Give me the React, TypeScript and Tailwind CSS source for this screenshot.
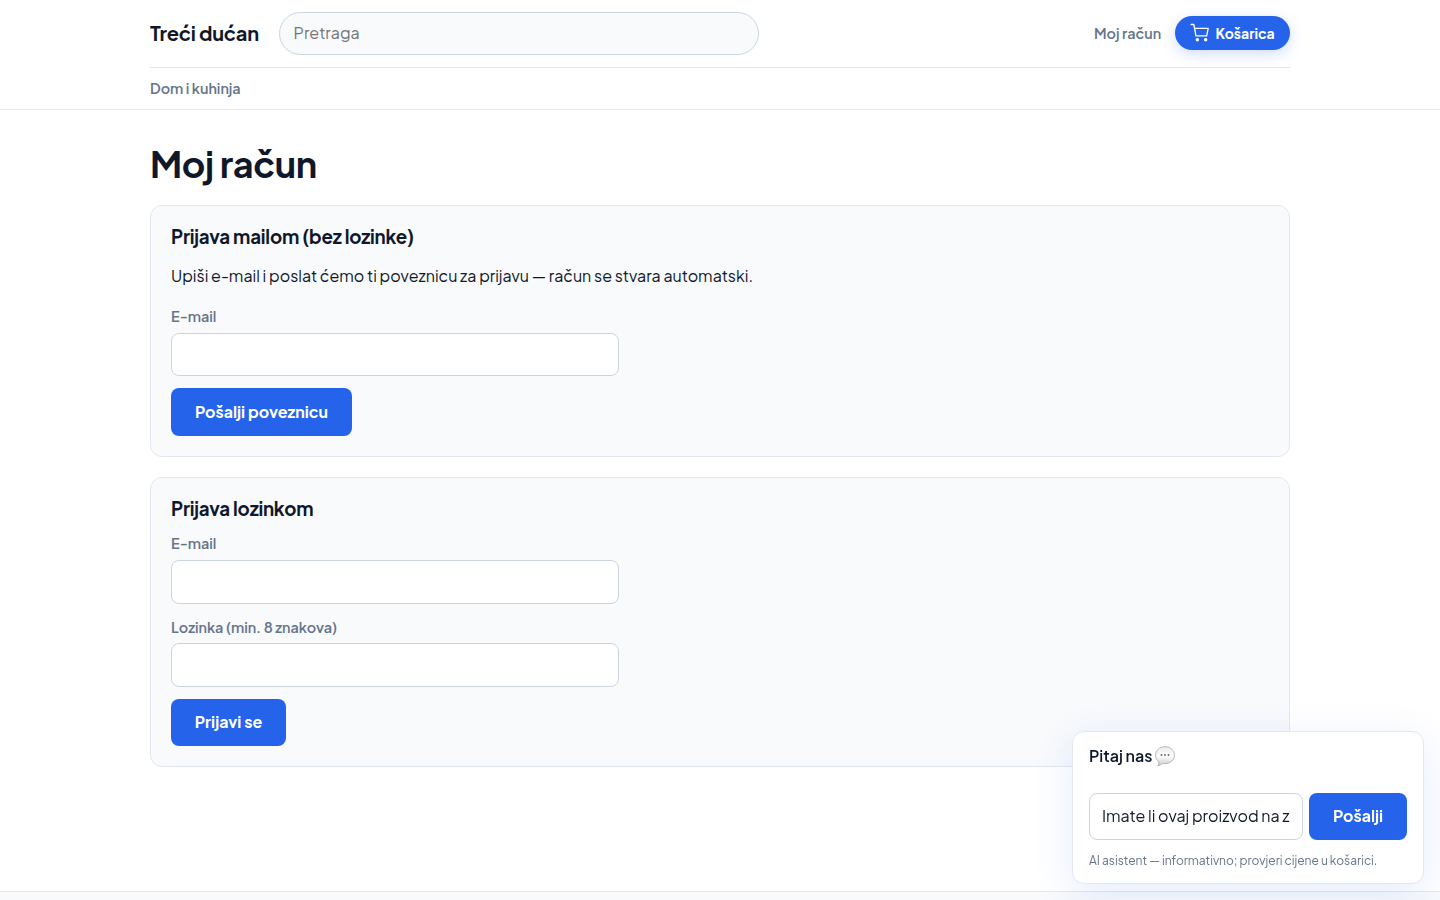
import type { ReactNode } from "react";

function Label({ children, className }: { children: ReactNode; className: string }) {
  return <span className={`block whitespace-nowrap text-[14.4px] font-semibold text-[#64748b] ${className}`}>{children}</span>;
}

function TextField({ className, type }: { className: string; type: string }) {
  return <input type={type} className={`block w-[448px] rounded-lg border border-[#cbd5e1] bg-white px-3 outline-none ${className}`} />;
}

function CartIcon() {
  return (
    <svg width="20" height="20" viewBox="0 0 24 24" fill="none" stroke="currentColor" strokeWidth="1.6" strokeLinecap="round" strokeLinejoin="round">
      <path d="M1.4 1.8h3.200l2.600 13.600h12.800L21.800 6.400H5.500" />
      <circle cx="8.800" cy="20" r="1.300" fill="currentColor" />
      <circle cx="18.800" cy="20" r="1.300" fill="currentColor" />
    </svg>
  );
}

function SpeechBalloon() {
  return (
    <svg width="20" height="21" viewBox="0 0 20 21" className="shrink-0">
      <defs>
        <linearGradient id="balloon" x1="0" y1="0" x2="0" y2="1">
          <stop offset="0" stopColor="#ececec" />
          <stop offset="0.5" stopColor="#fdfdfd" />
          <stop offset="1" stopColor="#cccccc" />
        </linearGradient>
      </defs>
      <path d="M10 .7C4.500.7.600 4.300.600 9.200c0 3 1.300 5.300 3.500 6.800 0 1.400-.5 2.600-1.500 3.600 2 0 3.700-.8 4.800-2.200.8.200 1.700.2 2.600.2 5.500 0 9.400-3.500 9.400-8.400S15.500.7 10 .7Z" fill="url(#balloon)" stroke="#b0b0b0" strokeWidth=".9" />
      <circle cx="6.500" cy="9" r=".9" fill="#666" />
      <circle cx="10" cy="9" r=".9" fill="#666" />
      <circle cx="13.500" cy="9" r=".9" fill="#666" />
    </svg>
  );
}

export default function App() {
  return (
    <div className="flex h-[900px] flex-col overflow-hidden bg-white font-['Plus_Jakarta_Sans',Inter,sans-serif] text-base text-[#0f172a]">
      <header className="h-[110px] shrink-0 border-b border-[#e2e8f0]">
        <div className="mx-auto w-[1140px]">
          <div className="flex h-[68px] items-center border-b border-[#e2e8f0]">
            <a className="w-[129px] pb-px text-[20px] font-bold tracking-[-0.01em] whitespace-nowrap">Treći dućan</a>
            <input placeholder="Pretraga" className="h-[43px] w-[480px] rounded-full border border-[#cbd5e1] bg-[#f8fafc] px-[13.6px] pb-[3px] outline-none placeholder:text-[#757575]" />
            <nav className="ml-auto flex items-center gap-[14px] pb-px">
              <a className="w-[67px] pt-0.5 text-[14.4px] font-semibold whitespace-nowrap text-[#64748b]">Moj račun</a>
              <a className="flex h-[34px] w-[115px] items-center gap-[5.5px] rounded-full bg-[#2563eb] pl-[15px] text-[14px] font-bold text-white shadow-[0_4px_14px_rgba(37,99,235,0.22)]">
                <CartIcon />
                Košarica
              </a>
            </nav>
          </div>
          <nav className="flex h-[41px] items-center">
            <a className="text-[14.4px] font-semibold whitespace-nowrap text-[#64748b]">Dom i kuhinja</a>
          </nav>
        </div>
      </header>

      <main className="mx-auto flex w-[1140px] flex-1 flex-col">
        <h1 className="mt-[29px] h-[50px] text-[36px] leading-[50px] font-bold tracking-[-0.01em] whitespace-nowrap">Moj račun</h1>

        <section className="mt-4 h-[252px] shrink-0 rounded-xl border border-[#e2e8f0] bg-[#f8fafc] p-5">
          <h2 className="w-max text-[18.72px] leading-[22px] font-bold tracking-[-0.01em]">Prijava mailom (bez lozinke)</h2>
          <p className="mt-4 w-max leading-6">Upiši e-mail i poslat ćemo ti poveznicu za prijavu — račun se stvara automatski.</p>
          <Label className="mt-[17px] leading-[22px]">E-mail</Label>
          <TextField type="email" className="mt-1.5 h-[43px]" />
          <button className="mt-3 block h-12 w-[181px] rounded-lg bg-[#2563eb] font-bold whitespace-nowrap text-white">Pošalji poveznicu</button>
        </section>

        <section className="mt-5 h-[290px] shrink-0 rounded-xl border border-[#e2e8f0] bg-[#f8fafc] p-5">
          <h2 className="w-max text-[18.72px] leading-[22px] font-bold tracking-[-0.01em]">Prijava lozinkom</h2>
          <Label className="mt-3 leading-[22px]">E-mail</Label>
          <TextField type="email" className="mt-1.5 h-11" />
          <Label className="mt-3 leading-[22px]">Lozinka (min. 8 znakova)</Label>
          <TextField type="password" className="mt-[5px] h-11" />
          <button className="mt-3 block h-[47px] w-[115px] rounded-lg bg-[#2563eb] pb-0.5 font-bold whitespace-nowrap text-white">Prijavi se</button>
        </section>
      </main>

      <footer className="h-[9px] shrink-0 border-t border-[#e2e8f0] bg-[#f8fafc]" />

      <aside className="fixed right-4 bottom-4 h-[153px] w-[352px] rounded-xl border border-[#e2e8f0] bg-white px-4 shadow-[0_10px_40px_rgba(37,99,235,0.12)]">
        <div className="mt-3 flex h-6 items-center gap-[3px] font-semibold">
          <span className="w-[63px] whitespace-nowrap">Pitaj nas</span>
          <SpeechBalloon />
        </div>
        <div className="mt-[25px] flex h-[47px] gap-1.5">
          <input defaultValue="Imate li ovaj proizvod na z" className="w-[214px] rounded-lg border border-[#cbd5e1] bg-white px-3 pb-0.5 outline-none" />
          <button className="w-[98px] rounded-lg bg-[#2563eb] pb-0.5 font-bold text-white">Pošalji</button>
        </div>
        <p className="mt-[11px] w-max text-xs leading-5 text-[#64748b]">AI asistent — informativno; provjeri cijene u košarici.</p>
      </aside>
    </div>
  );
}
